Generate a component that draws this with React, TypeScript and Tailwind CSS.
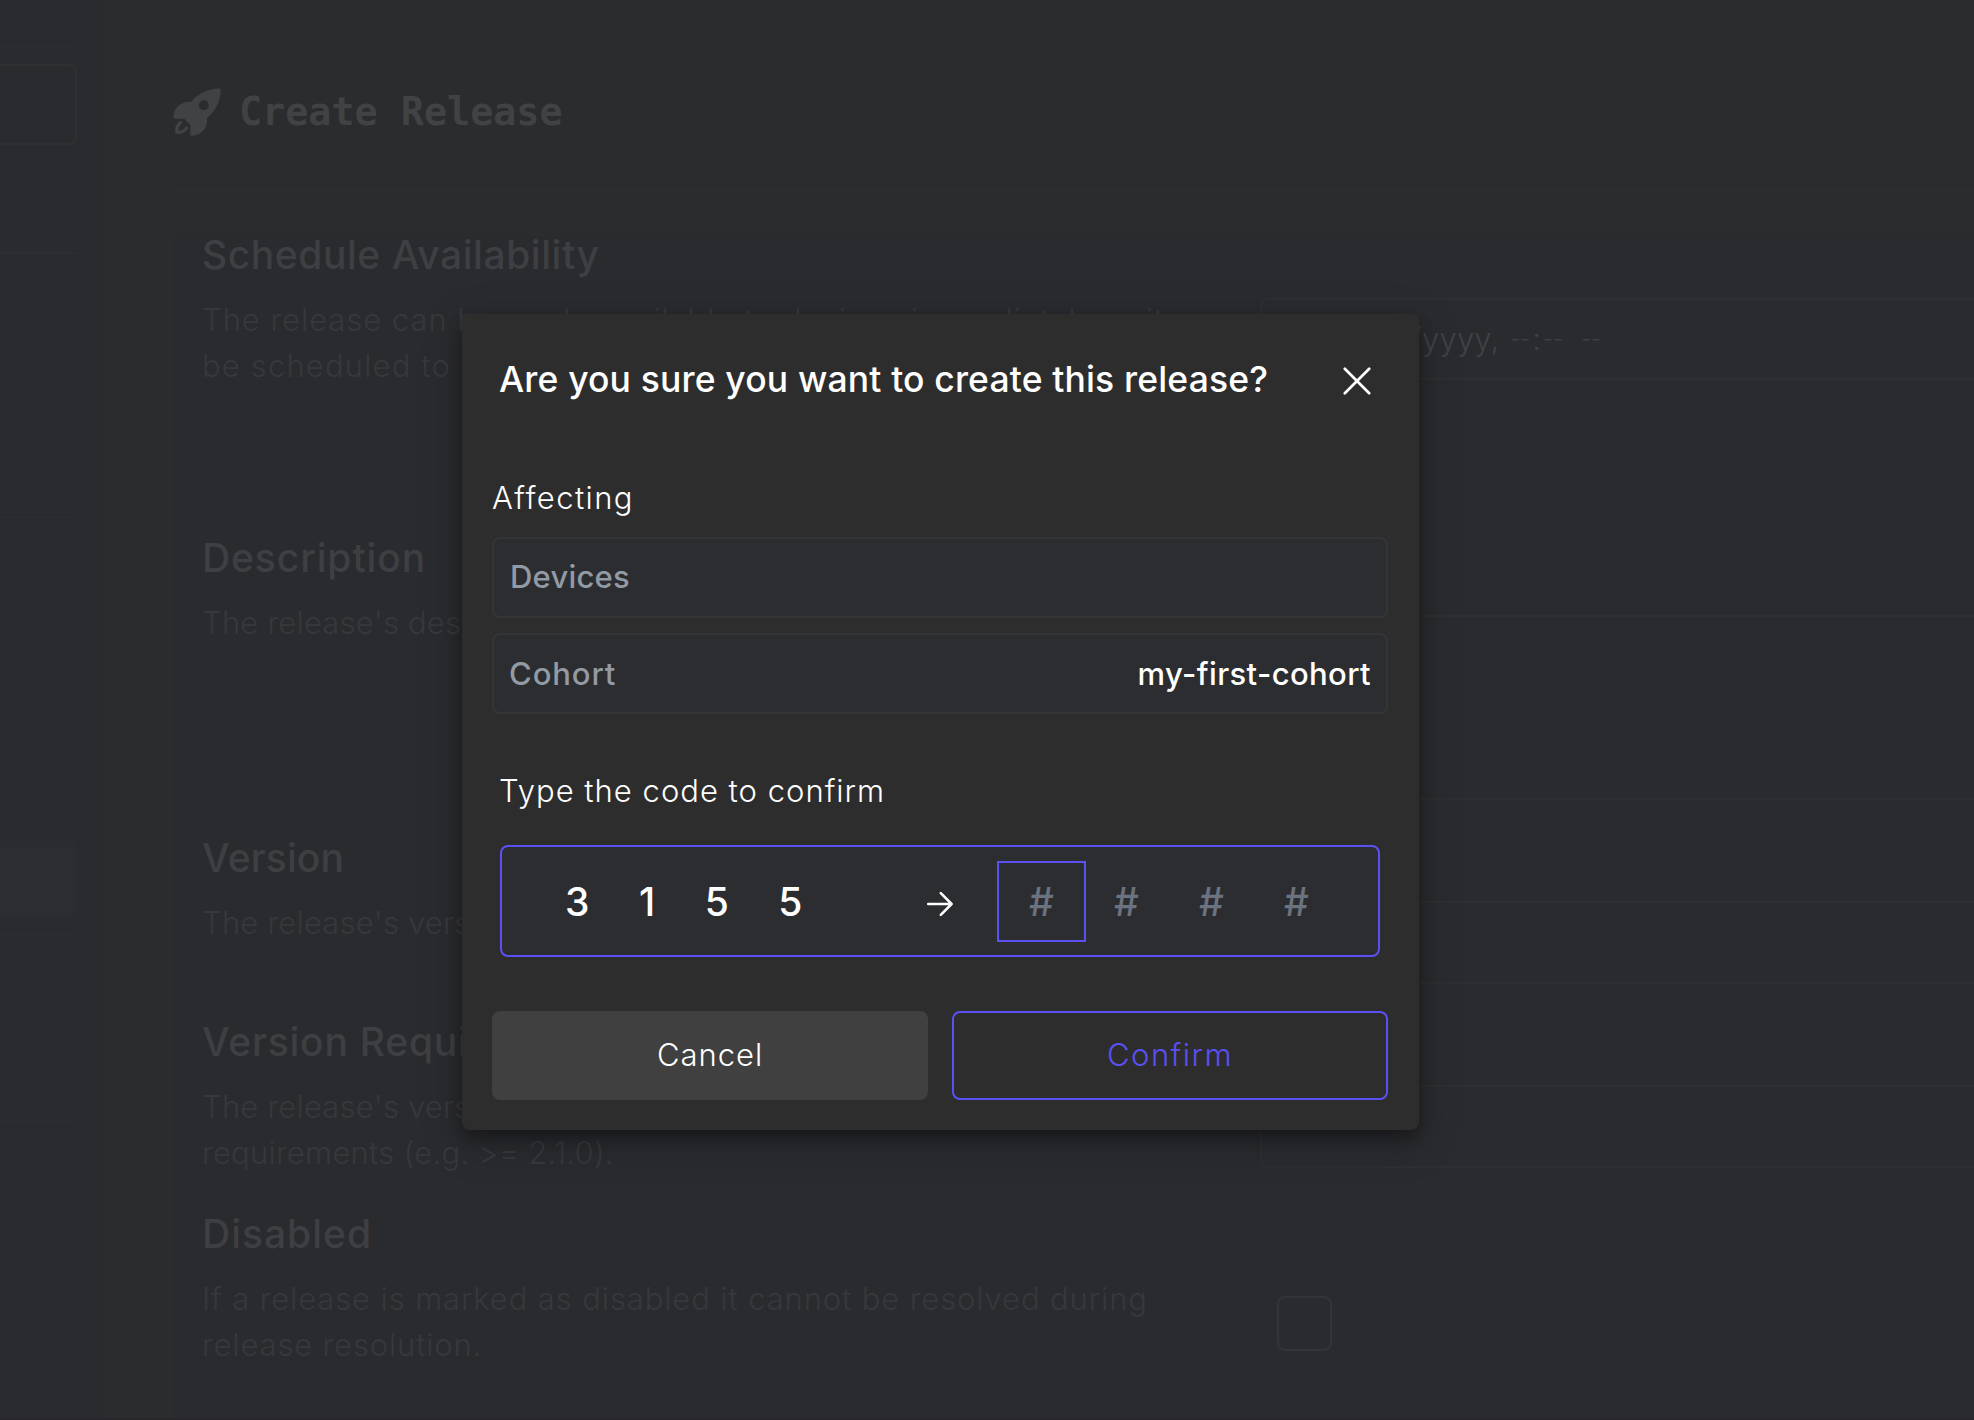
import React from "react";
import { HiRocketLaunch } from "react-icons/hi2";

type SettingProps = {
  title: string;
  titleClass?: string;
  lines: React.ReactNode;
  rowClass: string;
  children: React.ReactNode;
};

function Setting({ title, titleClass = "tracking-[0.6px]", lines, rowClass, children }: SettingProps) {
  return (
    <div className={`flex shrink-0 ${rowClass}`}>
      <div className="w-[1058px] shrink-0">
        <h2 className={`h-8 text-[39px] leading-[33px] font-medium text-[#3e3f42] ${titleClass}`}>{title}</h2>
        <div className="mt-[27px] text-[31px] leading-[46px] font-light whitespace-nowrap text-[#37383b]">{lines}</div>
      </div>
      {children}
    </div>
  );
}

function Sidebar() {
  return (
    <aside className="flex w-[106px] shrink-0 flex-col bg-[#2a2b2f] pr-[29px]">
      <div className="mt-[46px] h-[2px] shrink-0 bg-[#2c2d30]" />
      <div className="mt-4 h-[81px] shrink-0 rounded-r-lg border-2 border-l-0 border-[#2f3032]" />
      <div className="mt-[107px] h-[2px] shrink-0 bg-[#2d2e31]" />
      <div className="mt-[262px] h-[2px] shrink-0 bg-[#2c2d30]" />
      <div className="mt-[323px] h-[77px] shrink-0 rounded-r-lg bg-[#2c2d31]" />
      <div className="mt-4 h-[2px] shrink-0 bg-[#2c2d30]" />
      <div className="mt-[185px] h-[2px] shrink-0 bg-[#2c2d30]" />
    </aside>
  );
}

const inputBase = "flex-1 rounded-l-lg border-2 border-r-0 border-[#2e2f32]";

function Page() {
  return (
    <div className="flex h-[1418px] w-full">
      <Sidebar />
      <main className="flex min-w-0 flex-1 flex-col pl-16">
        <header className="flex h-[191px] shrink-0 items-start border-b-2 border-[#2d2e2f] pt-[85px] text-[#414244]">
          <HiRocketLaunch className="h-[54px] w-[54px]" />
          <h1 className="mt-1 ml-[15px] font-['DejaVu_Sans_Mono',monospace] text-[38.4px] leading-[46px] font-bold">
            Create Release
          </h1>
        </header>
        <section className="mt-[46px] flex flex-1 flex-col border-t border-l-2 border-t-[#2a2b2f] border-l-[#2c2d30] bg-[#2a2b2f] pl-[30px]">
          <Setting
            title="Schedule Availability"
            titleClass="tracking-[0.55px]"
            rowClass="h-[303px]"
            lines={
              <>
                <p className="tracking-[0.95px]">The release can be made available to devices immediately or it can</p>
                <p className="tracking-[1.15px]">be scheduled to become</p>
              </>
            }
          >
            <div className={`${inputBase} mt-[60px] flex h-[82px] items-center text-[31px] font-light whitespace-pre text-[#404144]`}>
              <span className="w-[160px] shrink-0 text-right tracking-[0.6px]">mm/dd/</span>
              <span className="w-[88px] shrink-0 tracking-[0.2px]">yyyy,</span>
              <span className="flex w-[71px] shrink-0 items-center">
                <span className="text-[23px] tracking-[-0.3px]">--</span>
                <span className="px-[2px]">:</span>
                <span className="text-[23px] tracking-[-0.3px]">--</span>
              </span>
              <span className="text-[23px] tracking-[-0.3px]">--</span>
            </div>
          </Setting>
          <Setting
            title="Description"
            titleClass="tracking-[0.9px]"
            rowClass="h-[300px]"
            lines={<p className="tracking-[0.2px]">The release's description</p>}
          >
            <div className={`${inputBase} mt-[74px] h-[185px]`} />
          </Setting>
          <Setting
            title="Version"
            titleClass="tracking-[0.1px]"
            rowClass="h-[184px]"
            lines={<p className="tracking-[0.2px]">The release's version</p>}
          >
            <div className={`${inputBase} mt-[60px] h-[83px]`} />
          </Setting>
          <Setting
            title="Version Requirement"
            titleClass="tracking-[0.75px]"
            rowClass="h-[192px]"
            lines={
              <>
                <p className="tracking-[0.2px]">The release's version requirement</p>
                <p className="tracking-[0.25px]">requirements (e.g. &gt;= 2.1.0).</p>
              </>
            }
          >
            <div className={`${inputBase} mt-[60px] h-[83px]`} />
          </Setting>
          <Setting
            title="Disabled"
            titleClass="tracking-[1px]"
            rowClass="h-[190px]"
            lines={
              <>
                <p className="tracking-[0.88px]">If a release is marked as disabled it cannot be resolved during</p>
                <p className="tracking-[0.85px]">release resolution.</p>
              </>
            }
          >
            <div className="mt-[79px] ml-[17px] h-[55px] w-[55px] rounded-lg border-2 border-[#333437]" />
          </Setting>
        </section>
      </main>
    </div>
  );
}

function Dialog() {
  return (
    <div className="absolute top-[314px] left-[462px] flex h-[816px] w-[957px] flex-col rounded-lg bg-[#2d2d2e] pt-[42px] pr-[31px] pb-[30px] pl-[30px] text-white shadow-[0_12px_44px_rgba(0,0,0,0.22),0_8px_14px_rgba(0,0,0,0.3)]">
      <div className="flex h-11 items-center justify-between pr-[17px] pl-[7px]">
        <h2 className="pt-[3px] text-[35.5px] leading-[44px] font-medium tracking-[0.15px] whitespace-nowrap">
          Are you sure you want to create this release?
        </h2>
        <svg viewBox="0 0 28 28" className="mt-[5px] h-7 w-7" fill="none" stroke="currentColor" strokeWidth="2.7" strokeLinecap="round">
          <path d="M1.8 1.8 26.2 26.2M26.2 1.8 1.8 26.2" />
        </svg>
      </div>

      <p className="mt-[78px] text-[31px] leading-10 font-light tracking-[1.4px]">Affecting</p>
      <div className="mt-[19px] flex h-[81px] shrink-0 items-center rounded-lg border-2 border-[#343538] bg-[#2c2d31] px-4 text-[31px] font-medium">
        <span className="tracking-[0.2px] text-[#929aa3]">Devices</span>
      </div>
      <div className="mt-[15px] flex h-[81px] shrink-0 items-center justify-between rounded-lg border-2 border-[#343538] bg-[#2c2d31] pt-[2px] pr-[15px] pl-[15px] text-[31px] font-medium">
        <span className="tracking-[0.9px] text-[#929aa3]">Cohort</span>
        <span className="tracking-[0.38px]">my-first-cohort</span>
      </div>

      <p className="mt-[57px] pl-[7px] text-[31px] leading-10 font-light tracking-[1px]">Type the code to confirm</p>
      <div className="mt-[34px] mr-2 ml-2 flex h-28 shrink-0 items-center rounded-lg border-2 border-[#5b50f4] bg-[#2c2d31] pl-[63px] text-[39px] leading-none font-medium">
        <div className="flex w-[238px] shrink-0 gap-[49.5px]">
          <span>3</span>
          <span>1</span>
          <span>5</span>
          <span>5</span>
        </div>
        <svg viewBox="0 0 26 26" className="mt-[6px] ml-[124px] h-[26px] w-[26px] shrink-0" fill="none" stroke="currentColor" strokeWidth="2.5" strokeLinecap="round" strokeLinejoin="round">
          <path d="M1.2 13H24.5M13.8 2.2 24.6 13 13.8 23.8" />
        </svg>
        <div className="ml-[46px] flex text-[#6b7280]">
          <span className="flex h-[77px] w-[85px] items-center justify-center outline-2 outline-[#5b50f4]">#</span>
          <span className="flex h-[77px] w-[85px] items-center justify-center">#</span>
          <span className="flex h-[77px] w-[85px] items-center justify-center">#</span>
          <span className="flex h-[77px] w-[85px] items-center justify-center">#</span>
        </div>
      </div>

      <div className="mt-[54px] grid h-[89px] grid-cols-2 gap-6 text-[31px] font-light">
        <button className="rounded-lg bg-[#404041] tracking-[0.97px]">Cancel</button>
        <button className="rounded-lg border-2 border-[#5b50f4] tracking-[1.5px] text-[#5b50f4]">Confirm</button>
      </div>
    </div>
  );
}

export default function App() {
  return (
    <div className="relative h-[1420px] w-full overflow-hidden bg-[#2b2c2d] font-['Inter',sans-serif]">
      <Page />
      <div className="h-[2px] bg-[#27272b]" />
      <Dialog />
    </div>
  );
}
